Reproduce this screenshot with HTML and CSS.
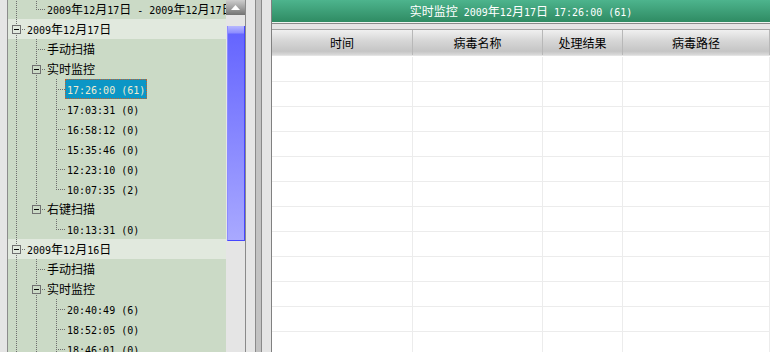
FILE: index.html
```html
<!DOCTYPE html>
<html lang="zh-CN">
<head>
    <meta charset="UTF-8">
    <title>实时监控</title>
    <link rel="stylesheet" href="styles.css">
</head>
<body>
<div class="app">
    <div class="left">
        <div class="tree">
            <div class="row"><span class="g v"></span><span class="g l"></span><span class="lbl"><span class="n">2009</span>年<span class="n">12</span>月<span class="n">17</span>日<span class="n"> - 2009</span>年<span class="n">12</span>月<span class="n">17</span>日</span></div>
            <div class="row day"><span class="g pm mid"><i class="box"></i></span><span class="lbl"><span class="n">2009</span>年<span class="n">12</span>月<span class="n">17</span>日</span></div>
            <div class="row"><span class="g v"></span><span class="g t"></span><span class="lbl">手动扫描</span></div>
            <div class="row"><span class="g v"></span><span class="g pm mid"><i class="box"></i></span><span class="lbl">实时监控</span></div>
            <div class="row"><span class="g v"></span><span class="g v"></span><span class="g t"></span><span class="lbl sel"><span class="n">17:26:00 (61)</span></span></div>
            <div class="row"><span class="g v"></span><span class="g v"></span><span class="g t"></span><span class="lbl"><span class="n">17:03:31 (0)</span></span></div>
            <div class="row"><span class="g v"></span><span class="g v"></span><span class="g t"></span><span class="lbl"><span class="n">16:58:12 (0)</span></span></div>
            <div class="row"><span class="g v"></span><span class="g v"></span><span class="g t"></span><span class="lbl"><span class="n">15:35:46 (0)</span></span></div>
            <div class="row"><span class="g v"></span><span class="g v"></span><span class="g t"></span><span class="lbl"><span class="n">12:23:10 (0)</span></span></div>
            <div class="row"><span class="g v"></span><span class="g v"></span><span class="g l"></span><span class="lbl"><span class="n">10:07:35 (2)</span></span></div>
            <div class="row"><span class="g v"></span><span class="g pm end"><i class="box"></i></span><span class="lbl">右键扫描</span></div>
            <div class="row"><span class="g v"></span><span class="g"></span><span class="g l"></span><span class="lbl"><span class="n">10:13:31 (0)</span></span></div>
            <div class="row day"><span class="g pm mid"><i class="box"></i></span><span class="lbl"><span class="n">2009</span>年<span class="n">12</span>月<span class="n">16</span>日</span></div>
            <div class="row"><span class="g v"></span><span class="g t"></span><span class="lbl">手动扫描</span></div>
            <div class="row"><span class="g v"></span><span class="g pm mid"><i class="box"></i></span><span class="lbl">实时监控</span></div>
            <div class="row"><span class="g v"></span><span class="g v"></span><span class="g t"></span><span class="lbl"><span class="n">20:40:49 (6)</span></span></div>
            <div class="row"><span class="g v"></span><span class="g v"></span><span class="g t"></span><span class="lbl"><span class="n">18:52:05 (0)</span></span></div>
            <div class="row"><span class="g v"></span><span class="g v"></span><span class="g t"></span><span class="lbl"><span class="n">18:46:01 (0)</span></span></div>
        </div>
        <div class="scroll">
            <div class="btn-up">
                <svg width="9" height="5" viewBox="0 0 9 5"><polygon points="4.5,0 9,5 0,5" fill="#fff"/></svg>
            </div>
            <div class="thumb"></div>
        </div>
    </div>

    <div class="split"><div class="bar"></div></div>

    <div class="right">
        <div class="title">实时监控<span class="n"> 2009</span>年<span class="n">12</span>月<span class="n">17</span>日<span class="n"> 17:26:00 (61)</span></div>
        <div class="table">
            <div class="thead">
                <div>时间</div>
                <div>病毒名称</div>
                <div>处理结果</div>
                <div>病毒路径</div>
            </div>
            <div class="tbody">
                <div class="tr"><i></i><i></i><i></i><i></i></div>
                <div class="tr"><i></i><i></i><i></i><i></i></div>
                <div class="tr"><i></i><i></i><i></i><i></i></div>
                <div class="tr"><i></i><i></i><i></i><i></i></div>
                <div class="tr"><i></i><i></i><i></i><i></i></div>
                <div class="tr"><i></i><i></i><i></i><i></i></div>
                <div class="tr"><i></i><i></i><i></i><i></i></div>
                <div class="tr"><i></i><i></i><i></i><i></i></div>
                <div class="tr"><i></i><i></i><i></i><i></i></div>
                <div class="tr"><i></i><i></i><i></i><i></i></div>
                <div class="tr"><i></i><i></i><i></i><i></i></div>
                <div class="tr"><i></i><i></i><i></i><i></i></div>
            </div>
        </div>
    </div>
</div>
</body>
</html>
```

FILE: styles.css
```css
body {
    margin: 0;
    background: #e5e5e5;
    font-family: "Noto Sans CJK SC", sans-serif;
    font-size: 12px;
    color: #000;
    overflow: hidden;
}
.n {
    font-family: "DejaVu Sans Mono", monospace;
    font-size: 10px;
}
.app {
    display: flex;
    height: 352px;
    overflow: hidden;
}

/* left tree */
.left {
    display: flex;
    margin-left: 7px;
    border-left: 1px solid #8c8c8c;
}
.tree {
    width: 218px;
    background: #cbdac6;
    overflow: hidden;
}
.row {
    display: flex;
    height: 20px;
    white-space: nowrap;
}
.row:first-child {
    margin-top: -1px;
}
.row.day {
    background: #e1e9de;
}
.g {
    flex: none;
    width: 20px;
    height: 20px;
}
.g.v {
    background: repeating-linear-gradient(#6e6e6e 0 1px, transparent 1px 2px) 8px 0 / 1px 20px no-repeat;
}
.g.t {
    background:
        repeating-linear-gradient(#6e6e6e 0 1px, transparent 1px 2px) 8px 0 / 1px 20px no-repeat,
        repeating-linear-gradient(to right, #6e6e6e 0 1px, transparent 1px 2px) 10px 10px / 8px 1px no-repeat;
}
.g.l {
    background:
        repeating-linear-gradient(#6e6e6e 0 1px, transparent 1px 2px) 8px 0 / 1px 11px no-repeat,
        repeating-linear-gradient(to right, #6e6e6e 0 1px, transparent 1px 2px) 10px 10px / 8px 1px no-repeat;
}
.g.pm.mid {
    background:
        repeating-linear-gradient(#6e6e6e 0 1px, transparent 1px 2px) 8px 0 / 1px 6px no-repeat,
        repeating-linear-gradient(#6e6e6e 0 1px, transparent 1px 2px) 8px 16px / 1px 4px no-repeat,
        repeating-linear-gradient(to right, #6e6e6e 0 1px, transparent 1px 2px) 14px 10px / 4px 1px no-repeat;
}
.g.pm.end {
    background:
        repeating-linear-gradient(#6e6e6e 0 1px, transparent 1px 2px) 8px 0 / 1px 6px no-repeat,
        repeating-linear-gradient(to right, #6e6e6e 0 1px, transparent 1px 2px) 14px 10px / 4px 1px no-repeat;
}
.box {
    display: block;
    width: 9px;
    height: 9px;
    margin: 6px 0 0 4px;
    box-sizing: border-box;
    border: 1px solid #707070;
    background: linear-gradient(#000, #000) center / 5px 1px no-repeat;
}
.lbl {
    flex: none;
    height: 20px;
    line-height: 18px;
    box-sizing: border-box;
    margin-left: -3px;
    padding: 0 1px;
    border: 1px solid transparent;
}
.lbl.sel {
    background: #0b96c6;
    color: #f0ecd0;
    border: 1px dotted #c8602a;
}

/* scrollbar */
.scroll {
    width: 19px;
    display: flex;
    flex-direction: column;
}
.btn-up {
    height: 15px;
    display: flex;
    align-items: center;
    justify-content: center;
    background: linear-gradient(#cdcdcd, #a2a2a2 50%, #727272);
}
.btn-up svg {
    display: block;
    margin-top: -1px;
}
.thumb {
    margin: 11px 0 0 1px;
    height: 215px;
    box-sizing: border-box;
    border-right: 1px solid #4646ff;
    border-bottom: 1px solid #4646ff;
    border-left: 1px solid #8c8cff;
    background: linear-gradient(#b8b8ff 0, #8c8cff 7px, #6565ff 8px, #a9a9ff 100%);
}

/* splitter */
.split {
    display: flex;
    border-left: 1px solid #8a8a8a;
    padding: 0 9px;
}
.bar {
    width: 5px;
    border: solid #8a8a8a;
    border-width: 0 1px;
    background: #c2c2c2;
}

/* right panel */
.right {
    flex: 1;
    border-left: 1px solid #808080;
}
.title {
    height: 22px;
    line-height: 22px;
    text-align: center;
    color: #fff;
    white-space: nowrap;
    background: linear-gradient(#4db48d, #2f8b63);
    border-bottom: 1px solid #eef4f0;
    box-shadow: 0 1px 0 #8a8a8a;
}
.table {
    margin-top: 6px;
    background: #fff;
    height: 400px;
}
.thead {
    display: grid;
    grid-template-columns: 141px 130px 80px 1fr;
    border-top: 1px solid #a4a4a4;
    border-bottom: 1px solid #e4e4e4;
    background: linear-gradient(#f0f0f0, #d8d8d8 40%, #c5c5c5 85%, #dadada);
}
.thead div {
    height: 25px;
    line-height: 25px;
    text-align: center;
    box-sizing: border-box;
    border-right: 1px solid #b8b8b8;
}
.tbody {
    padding-top: 1px;
}
.tr {
    display: grid;
    grid-template-columns: 141px 130px 80px 1fr;
}
.tr i {
    height: 25px;
    box-sizing: border-box;
    border-right: 1px solid #ececec;
    border-bottom: 1px solid #ececec;
}
```
